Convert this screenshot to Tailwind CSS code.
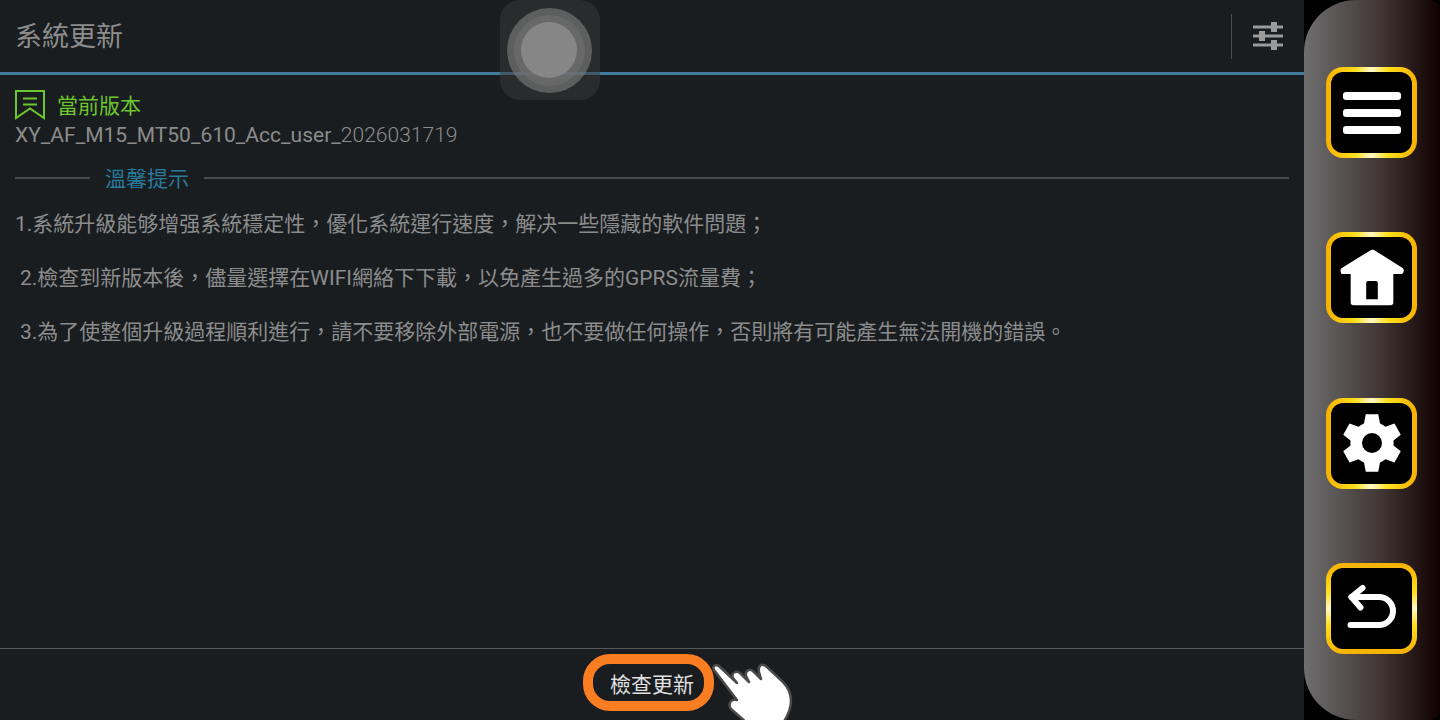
<!DOCTYPE html>
<html lang="zh-Hant">
<head>
  <meta charset="UTF-8" />
  <title>系統更新</title>
  <script src="https://cdn.jsdelivr.net/npm/@tailwindcss/browser@4"></script>
</head>
<body class="bg-black">
  <div class="relative flex h-[720px] w-[1440px] overflow-hidden bg-black font-['Roboto','Noto_Sans_CJK_TC',sans-serif]">

    <!-- Main panel -->
    <main class="flex w-[1304px] flex-col bg-[#191d20] text-[#8c8c8c]">
      <header class="flex h-[75px] items-center border-b-[3px] border-[#3f7b9d] pl-[15px]">
        <h1 class="flex-1 pt-[2px] text-[27px] leading-none">系統更新</h1>
        <div class="mt-px h-[45px] w-px bg-[#4a4d4f]"></div>
        <svg class="mx-[21px] mb-[2px] h-[30px] w-[30px]" viewBox="0 0 30 30" fill="#9a9a9a">
          <rect x="0" y="5.500" width="30" height="3" />
          <rect x="0" y="14.500" width="30" height="3" />
          <rect x="0" y="23.500" width="30" height="3" />
          <rect x="18" y="2" width="6" height="10" />
          <rect x="6" y="11" width="6" height="10" />
          <rect x="18" y="20" width="6" height="10" />
        </svg>
      </header>

      <section class="flex-1 px-[15px] pt-[15px]">
        <div class="flex h-[30px] items-center">
          <svg class="h-[30px] w-[30px]" viewBox="0 0 30 30" fill="none" stroke="#6cc72e" stroke-width="2">
            <path d="M1 1H29V28L15 18.500L1 28Z" />
            <path d="M8 8.500H22M8 14.500H22" />
          </svg>
          <span class="ml-[12px] pt-[2px] text-[21px] leading-none text-[#6cc72e]">當前版本</span>
        </div>
        <p class="text-[21px] leading-[30px] tracking-[0.02px]">XY_AF_M15_MT50_610_Acc_user_<span class="font-light">2026031719</span></p>

        <div class="mt-[13px] flex h-[30px] items-center">
          <div class="h-[2px] w-[75px] bg-[#4a4a4a]"></div>
          <span class="mx-[15px] pt-[2px] text-[21px] leading-none text-[#2a7a9c]">溫馨提示</span>
          <div class="h-[2px] flex-1 bg-[#4a4a4a]"></div>
        </div>

        <div class="mt-[4px] text-[21px] leading-[54px]">
          <p class="h-[54px]">1.系統升級能够增强系統穩定性，優化系統運行速度，解决一些隱藏的軟件問題；</p>
          <p class="h-[54px] pl-[5px]">2.檢查到新版本後，儘量選擇在WIFI網絡下下載，以免產生過多的GPRS流量費；</p>
          <p class="h-[54px] pl-[5px]">3.為了使整個升級過程順利進行，請不要移除外部電源，也不要做任何操作，否則將有可能產生無法開機的錯誤。</p>
        </div>
      </section>

      <footer class="flex h-[72px] justify-center border-t border-[#55585a] pt-[5px]">
        <button class="ml-[-8px] h-[57px] w-[131px] rounded-[27px] border-[10px] border-[#fb7d21] pt-[6px] pl-[8px] text-[21px] leading-none text-[#e0e0e0]">檢查更新</button>
      </footer>
    </main>

    <!-- Side rail -->
    <aside class="flex h-[720px] w-[136px] flex-col items-center justify-between rounded-l-[52px] rounded-r-[10px] bg-[linear-gradient(90deg,#6e6e6e_0%,#3d3230_60%,#100000_100%)] pt-[67px] pr-px pb-[66px]">
      <button class="h-[91px] w-[91px] rounded-[17px] bg-[linear-gradient(90deg,#f6b000_0%,#ffdf1c_32%,#fff9c8_50%,#ffdf1c_68%,#f6b000_100%)] p-[5px]">
        <span class="flex h-full w-full flex-col items-center justify-center gap-[9px] rounded-[12px] bg-black">
          <span class="h-[8px] w-[58px] rounded-[3px] bg-white"></span>
          <span class="h-[8px] w-[58px] rounded-[3px] bg-white"></span>
          <span class="h-[8px] w-[58px] rounded-[3px] bg-white"></span>
        </span>
      </button>
      <button class="h-[91px] w-[91px] rounded-[17px] bg-[linear-gradient(90deg,#f6b000_0%,#ffdf1c_32%,#fff9c8_50%,#ffdf1c_68%,#f6b000_100%)] p-[5px]">
        <span class="flex h-full w-full items-center justify-center rounded-[12px] bg-black">
          <svg class="h-[60px] w-[64px]" viewBox="0 0 66 60" fill="#fff">
            <path fill-rule="evenodd" d="M32 1L1.500 20Q-.5 22 1.500 26H11V55Q11 58 14 58H52Q55 58 55 55V26H64Q67 23 65 20L35 1Q33.500 .5 32 1ZM27 35Q27 33 29 33H37Q39 33 39 35V52H27Z" />
          </svg>
        </span>
      </button>
      <button class="h-[91px] w-[91px] rounded-[17px] bg-[linear-gradient(90deg,#f6b000_0%,#ffdf1c_32%,#fff9c8_50%,#ffdf1c_68%,#f6b000_100%)] p-[5px]">
        <span class="flex h-full w-full items-center justify-center rounded-[12px] bg-black">
          <svg class="h-[62px] w-[60px]" viewBox="0 0 24 24" fill="#fff">
            <path fill-rule="evenodd" d="M14.500 .5H9.500L8.800 4.200Q7.600 4.700 6.600 5.500L3 4.200L.5 8.700L3.400 11Q3.300 12 3.400 13L.5 15.300L3 19.800L6.600 18.500Q7.600 19.300 8.800 19.800L9.500 23.500H14.500L15.200 19.800Q16.400 19.300 17.400 18.500L21 19.800L23.500 15.300L20.600 13Q20.700 12 20.600 11L23.500 8.700L21 4.200L17.400 5.500Q16.400 4.700 15.200 4.200ZM12 8A4 4 0 1 1 12 16A4 4 0 1 1 12 8Z" />
          </svg>
        </span>
      </button>
      <button class="h-[91px] w-[91px] rounded-[17px] bg-[linear-gradient(180deg,#f6b000_0%,#ffdf1c_32%,#fff9c8_50%,#ffdf1c_68%,#f6b000_100%)] p-[5px]">
        <span class="flex h-full w-full items-center justify-center rounded-[12px] bg-black">
          <svg class="h-[48px] w-[52px]" viewBox="0 0 52 48" fill="none" stroke="#fff" stroke-width="6" stroke-linecap="round" stroke-linejoin="round">
            <path d="M16.500 4L5.500 13L14.500 23.500" />
            <path d="M5.500 13H33A14 14 0 0 1 33 41H4.500" />
          </svg>
        </span>
      </button>
    </aside>

    <!-- Floating assistive ball, sits over the header -->
    <div class="absolute top-0 left-[500px] flex h-[100px] w-[100px] items-center justify-center rounded-[20px] bg-[#3a3a3a]/50">
      <div class="flex h-[85px] w-[85px] -translate-x-px items-center justify-center rounded-full bg-[#7a7a7a]/65">
        <div class="flex h-[71px] w-[71px] items-center justify-center rounded-full bg-[#707070]/60">
          <div class="h-[56px] w-[56px] rounded-full bg-[#8a8a8a]/90"></div>
        </div>
      </div>
    </div>

    <!-- Pointing hand over the button -->
    <svg class="absolute top-[663px] left-[711px] h-[62px] w-[84px]" viewBox="0 0 84 62" fill="#fff" stroke="#4a4a4a" stroke-width="2.500" stroke-linejoin="round">
      <path d="M3 7Q1 3 5 2Q7 2 9 4L26 20L22 15Q20 11 24 9Q27 8 29 10L38 19L35 13Q34 8 38 7Q40 6 43 9L50 16L48 9Q47 4 50 2Q53 1 56 4L72 19Q80 27 80 38Q80 48 72 60H36L20 46Q17 42 20 38Q22 36 26 37Z" />
    </svg>
  </div>
</body>
</html>
